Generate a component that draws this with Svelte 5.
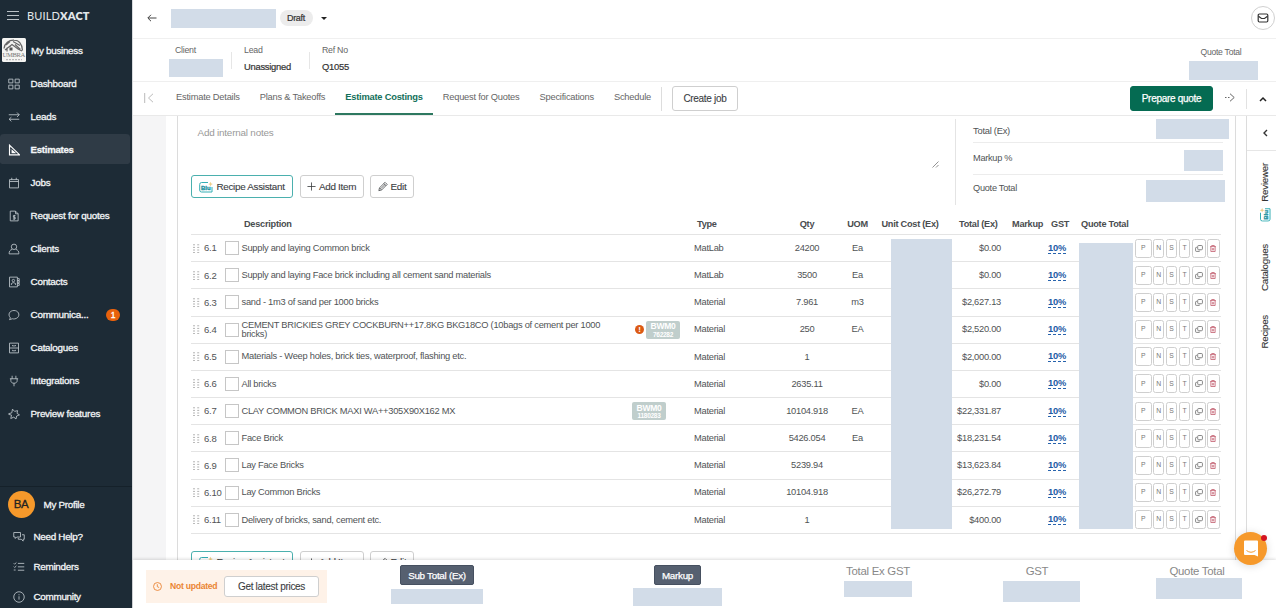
<script lang="ts">

    type NavItem = { icon: string; label: string; badge?: number };

    type CostItem = {
        no: string;
        description: string;
        type: string;
        qty: string;
        uom: string;
        total: string;
        supplier?: string;
        code?: string;
        warning?: boolean;
    };

    const icons: Record<string, string> = {
        dashboard: "M1 1.500h5.500v5H1zM9.500 1.500H15v5H9.500zM1 9.500h5.500v5H1zM9.500 9.500H15v5H9.500z",
        leads: "M1 5h14M12 2l3 3-3 3M15 11H1.500M4.500 8.200l-3 2.800 3 2.800",
        estimates: "M2 1.500V14.500H15.500ZM5.500 8.500V11.500H9ZM2 4.500h1M2 7.500h1",
        jobs: "M2 3.500h12v11H2zM2 6h12M5 1v3M11 1v3",
        quotes: "M3 1.500h7l3.500 3.500v9.500H3zM10 1.500V5h3.500M10 7.500H7.200v2.200h2.400v2.300H6.500M8.300 6.500v6.500",
        clients: "M8 1.500a3.600 3.600 0 1 1 0 7.200a3.600 3.600 0 1 1 0-7.200M5.500 8.500C2.500 9.500 1.500 11 1.500 14.500h13c0-3.500-1-5-4-6",
        contacts: "M2 1.500h10.500v13H2zM12.500 3.500H15v2.500h-2.500M12.500 6.500H15V9h-2.500M12.500 10H15v2.500h-2.500M7.200 4.500a1.600 1.600 0 1 1 0 3.200a1.600 1.600 0 1 1 0-3.200M4.500 11.500c0-3.500 5.500-3.500 5.500 0M4.500 11.500v-1.500M10 11.500v-1.500",
        chat: "M3.200 11.800C-1 7 2.500 2 8 2s8.500 5.500 5 9.200C10.500 13.500 7.500 13.500 5.800 13L2 14.200z",
        catalogues: "M2 1.500h12v13H2zM2 8h12M6 4v1.200h4V4M6 10.500v1.200h4v-1.200",
        plug: "M5.500 1v4M10.500 1v4M2.500 5h11M3.800 5v2.500c0 2 1.500 3.500 4.200 3.500s4.200-1.500 4.200-3.500V5M8 11v4",
        star: "M6 1.500l2.800 3 4-1-.8 3.700 3.300 2-3.800 1.500-.8 4-3-2.500-4 1.800 1-4.500-3.700-1V7.500l4-1z",
        help: "M1 2h9v6H5L3 10V8H1zM12 5h3v6h-1.500v2.500L11 11H7V9",
        reminders: "M1 3l1.200 1.200L4.500 2M1 7.500l1.200 1.200 2.300-2.200M1 12h2.500M6.500 3.200H15M6.500 7.800H15M6.500 12.300H15",
        info: "M8 1a7 7 0 1 1 0 14a7 7 0 1 1 0-14M8 7v4.500M8 4.300v1.400"
    };

    const navItems: NavItem[] = [
        { icon: "dashboard", label: "Dashboard" },
        { icon: "leads", label: "Leads" },
        { icon: "estimates", label: "Estimates" },
        { icon: "jobs", label: "Jobs" },
        { icon: "quotes", label: "Request for quotes" },
        { icon: "clients", label: "Clients" },
        { icon: "contacts", label: "Contacts" },
        { icon: "chat", label: "Communica...", badge: 1 },
        { icon: "catalogues", label: "Catalogues" },
        { icon: "plug", label: "Integrations" },
        { icon: "star", label: "Preview features" }
    ];

    const helpItems: NavItem[] = [
        { icon: "help", label: "Need Help?" },
        { icon: "reminders", label: "Reminders" },
        { icon: "info", label: "Community" }
    ];

    const tabs = ["Estimate Details", "Plans & Takeoffs", "Estimate Costings", "Request for Quotes", "Specifications", "Schedule"];

    const items: CostItem[] = [
        { no: "6.1", description: "Supply and laying Common brick", type: "MatLab", qty: "24200", uom: "Ea", total: "$0.00" },
        { no: "6.2", description: "Supply and laying Face brick including all cement sand materials", type: "MatLab", qty: "3500", uom: "Ea", total: "$0.00" },
        { no: "6.3", description: "sand - 1m3 of sand per 1000 bricks", type: "Material", qty: "7.961", uom: "m3", total: "$2,627.13" },
        { no: "6.4", description: "CEMENT BRICKIES GREY COCKBURN++17.8KG BKG18CO (10bags of cement per 1000 bricks)", type: "Material", qty: "250", uom: "EA", total: "$2,520.00", supplier: "BWM0", code: "762282", warning: true },
        { no: "6.5", description: "Materials - Weep holes, brick ties, waterproof, flashing etc.", type: "Material", qty: "1", uom: "", total: "$2,000.00" },
        { no: "6.6", description: "All bricks", type: "Material", qty: "2635.11", uom: "", total: "$0.00" },
        { no: "6.7", description: "CLAY COMMON BRICK MAXI WA++305X90X162 MX", type: "Material", qty: "10104.918", uom: "EA", total: "$22,331.87", supplier: "BWM0", code: "1180283" },
        { no: "6.8", description: "Face Brick", type: "Material", qty: "5426.054", uom: "Ea", total: "$18,231.54" },
        { no: "6.9", description: "Lay Face Bricks", type: "Material", qty: "5239.94", uom: "", total: "$13,623.84" },
        { no: "6.10", description: "Lay Common Bricks", type: "Material", qty: "10104.918", uom: "", total: "$26,272.79" },
        { no: "6.11", description: "Delivery of bricks, sand, cement etc.", type: "Material", qty: "1", uom: "", total: "$400.00" }
    ];

    let activeNav = $state("Estimates");
    let activeTab = $state("Estimate Costings");

</script>

{#snippet icon(name: string)}
    <svg class="icon" viewBox="0 0 16 16" aria-hidden="true"><path d={icons[name]} /></svg>
{/snippet}

{#snippet blu()}
    <svg class="blu" viewBox="0 0 14 12" aria-hidden="true">
        <path d="M9 1.500H2.500Q.7 1.500.7 3.500V9Q.7 11 2.500 11H13V6" fill="none" stroke="#35aeb4" />
        <text x="2" y="8.600">Blu</text>
        <path d="M10.700 2.500l.8-1.800.8 1.800 1.600.6-1.600.7-.8 1.400-.8-1.400-1.400-.7z" fill="#f0cf8c" />
    </svg>
{/snippet}

{#snippet toolbar()}
    <div class="toolbar">
        <button class="btn btn-recipe" type="button">{@render blu()}Recipe Assistant</button>
        <button class="btn btn-add" type="button">
            <svg class="plus" viewBox="0 0 10 10" aria-hidden="true"><path d="M5 .5v9M.5 5h9" /></svg>
            Add Item
        </button>
        <button class="btn btn-edit" type="button">
            <svg class="pencil" viewBox="0 0 12 12" aria-hidden="true"><path d="M1 11l.8-3.400L8.500 1l2.500 2.500L4.300 10.200zM7 2.500L9.500 5M2 7.800l2.200 2.200M3.500 8.500l5-5" /></svg>
            Edit
        </button>
    </div>
{/snippet}

<div class="app">
    <aside class="sidebar">
        <div class="brand">
            <svg class="burger" viewBox="0 0 12 9" aria-hidden="true"><path d="M0 .5h12M0 4.500h12M0 8.500h12" /></svg>
            <span class="brand-name">BUILD<b>XACT</b></span>
        </div>
        <div class="business">
            <svg class="business-logo" viewBox="0 0 24 24" aria-hidden="true">
                <rect width="24" height="24" rx="1.500" fill="#f4f4f2" stroke="none" />
                <path d="M2 10.500C2.500 5 7 2 12 2.200c5 0 8 4 8.500 10.300M3 12l7-5.500 6 4.500 4 2M5 13.500V10l4-2M4 7l4-3.500M11 3.500l7 4M13 6.500l5.500 5" fill="none" stroke="#666" stroke-width="1.200" />
                <path d="M7.500 9.500h3v3h-3z" fill="#555" stroke="none" />
                <text x="0.500" y="19.300" class="logo-name">UMBRA</text>
                <path d="M4 21.700h16" stroke="#aaa" stroke-dasharray="2 1" />
            </svg>
            <span>My business</span>
        </div>
        <nav class="nav">
            {#each navItems as item}
                <button class="nav-item" class:nav-item-active={item.label === activeNav} type="button" onclick={() => (activeNav = item.label)}>
                    {@render icon(item.icon)}
                    <span class="nav-label">{item.label}</span>
                    {#if item.badge}
                        <span class="nav-badge">{item.badge}</span>
                    {/if}
                </button>
            {/each}
        </nav>
        <div class="profile">
            <div class="profile-row"><span class="avatar">BA</span>My Profile</div>
            {#each helpItems as item}
                <div class="help-row">{@render icon(item.icon)}{item.label}</div>
            {/each}
        </div>
    </aside>

    <main class="main">
        <header class="titlebar">
            <svg class="back" viewBox="0 0 10 8" aria-hidden="true"><path d="M9.500 4H1M4 .8L.8 4 4 7.200" /></svg>
            <span class="redacted title-block"></span>
            <span class="status">Draft</span>
            <span class="caret"></span>
            <button class="mail" type="button" aria-label="Messages">
                <svg viewBox="0 0 12 10" aria-hidden="true"><rect x="1.200" y="1" width="9.600" height="8" rx="1.200" /><path d="M1.500 3.200L4.500 5.500h3L10.500 3.200" /></svg>
            </button>
        </header>

        <section class="info">
            <div class="info-cell client">
                <span class="info-label">Client</span>
                <span class="redacted client-block"></span>
            </div>
            <span class="info-divider"></span>
            <div class="info-cell lead"><span class="info-label">Lead</span><span class="info-value">Unassigned</span></div>
            <span class="info-divider"></span>
            <div class="info-cell ref"><span class="info-label">Ref No</span><span class="info-value">Q1055</span></div>
            <div class="info-total">
                <span class="info-label">Quote Total</span>
                <span class="redacted total-block"></span>
            </div>
        </section>

        <div class="tabbar">
            <svg class="tab-first" viewBox="0 0 10 10" aria-hidden="true"><path d="M.7 0v10M9 .8L4.500 5 9 9.200" /></svg>
            {#each tabs as tab}
                <button class="tab" class:tab-active={tab === activeTab} type="button" onclick={() => (activeTab = tab)}>{tab}</button>
            {/each}
            <span class="tab-divider"></span>
            <button class="btn btn-job" type="button">Create job</button>
            <button class="btn btn-prepare" type="button">Prepare quote</button>
            <svg class="next" viewBox="0 0 10 9" aria-hidden="true"><path d="M0 4.500h1.500M3 4.500h1.500M5 .7l4.200 3.800L5 8.300" /></svg>
            <span class="collapse">
                <svg viewBox="0 0 8 6" aria-hidden="true"><path d="M1 5l3-3 3 3" /></svg>
            </span>
        </div>

        <div class="workspace">
            <div class="canvas">
                <div class="sheet">
                    <div class="overview">
                        <div class="overview-left">
                            <div class="notes">
                                Add internal notes
                                <svg class="resize" viewBox="0 0 7 7" aria-hidden="true"><path d="M.5 6.500l6-6M4 6.500L6.500 4" /></svg>
                            </div>
                            {@render toolbar()}
                        </div>
                        <div class="summary">
                            <div class="summary-row row-total"><span>Total (Ex)</span><i class="redacted"></i></div>
                            <div class="summary-row row-markup"><span>Markup %</span><i class="redacted"></i></div>
                            <div class="summary-row row-quote"><span>Quote Total</span><i class="redacted"></i></div>
                        </div>
                    </div>

                    <div class="table">
                        <div class="row head">
                            <span class="h-desc">Description</span>
                            <span class="h-type">Type</span>
                            <span class="center">Qty</span>
                            <span class="center">UOM</span>
                            <span class="center">Unit Cost (Ex)</span>
                            <span class="h-total">Total (Ex)</span>
                            <span class="h-markup">Markup</span>
                            <span class="h-gst">GST</span>
                            <span class="h-quote">Quote Total</span>
                        </div>
                        {#each items as item}
                            <div class="row">
                                <svg class="grip" viewBox="0 0 7 9" aria-hidden="true"><path d="M0 .8h2M4.200.8h2M0 3.400h2M4.200 3.400h2M0 6h2M4.200 6h2M0 8.600h2M4.200 8.600h2" /></svg>
                                <span class="no">{item.no}</span>
                                <span class="check"></span>
                                <span class="desc">{item.description}</span>
                                <span class="tags">
                                    {#if item.warning}
                                        <span class="warning">!</span>
                                    {/if}
                                    {#if item.supplier}
                                        <span class="chip"><b>{item.supplier}</b><small>{item.code}</small></span>
                                    {/if}
                                </span>
                                <span class="cell">{item.type}</span>
                                <span class="cell center">{item.qty}</span>
                                <span class="cell center">{item.uom}</span>
                                <span></span>
                                <span class="cell right">{item.total}</span>
                                <span></span>
                                <span class="center"><span class="gst">10%</span></span>
                                <span></span>
                                <span class="actions">
                                    {#each ["P", "N", "S", "T"] as letter}
                                        <button class="action action-{letter.toLowerCase()}" type="button">{letter}</button>
                                    {/each}
                                    <button class="action action-copy" type="button" aria-label="Copy">
                                        <svg viewBox="0 0 9 8" aria-hidden="true"><rect x="3" y=".6" width="5.400" height="4.800" rx="1" /><path d="M2.200 2.700H1.500Q.6 2.700.6 3.600V6.400Q.6 7.300 1.500 7.300H4.500Q5.400 7.300 5.400 6.500" /></svg>
                                    </button>
                                    <button class="action action-trash" type="button" aria-label="Delete">
                                        <svg viewBox="0 0 7 8" aria-hidden="true"><path d="M0 1.800h7M2 1.800V.5h3v1.300M1 2v5.500h5V2M2.700 3.500v2.700M4.300 3.500v2.700" /></svg>
                                    </button>
                                </span>
                            </div>
                        {/each}
                        <div class="redacted cover-cost"></div>
                        <div class="redacted cover-quote"></div>
                    </div>

                    {@render toolbar()}
                </div>
            </div>
            <aside class="rail">
                <div class="rail-toggle">
                    <svg viewBox="0 0 6 8" aria-hidden="true"><path d="M5 1L2 4l3 3" /></svg>
                </div>
                <div class="rail-item rail-reviewer">{@render blu()}<span>Reviewer</span></div>
                <div class="rail-item rail-catalogues">Catalogues</div>
                <div class="rail-item rail-recipes">Recipes</div>
            </aside>
        </div>

        <footer class="footer">
            <div class="stale">
                <svg viewBox="0 0 10 10" aria-hidden="true"><path d="M5 .6a4.400 4.400 0 1 1 0 8.800a4.400 4.400 0 1 1 0-8.800M4.800 2.500V5.200l2 .9" /></svg>
                <b>Not updated</b>
                <button class="btn btn-prices" type="button">Get latest prices</button>
            </div>
            <div class="figure fig-sub"><span class="figure-btn">Sub Total (Ex)</span><i class="redacted"></i></div>
            <div class="figure fig-markup"><span class="figure-btn">Markup</span><i class="redacted"></i></div>
            <div class="figure fig-ex"><span class="figure-label">Total Ex GST</span><i class="redacted"></i></div>
            <div class="figure fig-gst"><span class="figure-label">GST</span><i class="redacted"></i></div>
            <div class="figure fig-quote"><span class="figure-label">Quote Total</span><i class="redacted"></i></div>
        </footer>
    </main>

    <div class="chat-launcher">
        <svg viewBox="0 0 16 17" aria-hidden="true">
            <path d="M2 .5h12Q15 .5 15 1.500V16.500L11.500 15H2Q1 15 1 14V1.500Q1 .5 2 .5z" fill="#fff" />
            <path class="smile" d="M3.500 10.500q4.500 3.500 9 0" />
        </svg>
        <span class="chat-dot"></span>
    </div>
</div>

<style>
    :global(body) {
        background: #fff;
    }

    .app {
        position: relative;
        display: flex;
        width: 1276px;
        height: 608px;
        overflow: hidden;
        background: #fff;
        color: #505355;
        font-family: "Liberation Sans", Arial, sans-serif;
        font-size: 9.3px;
        letter-spacing: -0.028em;
        line-height: 1;
    }

    .app * {
        box-sizing: border-box;
    }

    button {
        margin: 0;
        padding: 0;
        border: 0;
        background: transparent;
        color: inherit;
        font: inherit;
        letter-spacing: -0.03em;
        white-space: nowrap;
    }

    svg {
        display: block;
        flex: none;
        fill: none;
        stroke: currentColor;
    }

    .redacted {
        display: block;
        flex: none;
        background: #d2dce8;
    }

    /* sidebar */
    .sidebar {
        display: flex;
        flex: none;
        flex-direction: column;
        width: 132px;
        background: #1d2b36;
        color: #f3f5f6;
        font-size: 9.9px;
        letter-spacing: -0.3px;
        -webkit-text-stroke: 0.3px currentColor;
    }

    .brand {
        display: flex;
        align-items: center;
        gap: 8px;
        height: 31px;
        padding-left: 7px;
    }

    .burger {
        width: 12px;
        height: 9px;
        color: #b9c0c5;
    }

    .brand-name {
        color: #e3e7ea;
        font-family: Lato, sans-serif;
        font-size: 11px;
        letter-spacing: 0.15px;
        -webkit-text-stroke: 0;
    }

    .brand-name b {
        font-weight: 800;
    }

    .business {
        display: flex;
        align-items: center;
        gap: 4px;
        height: 36px;
        padding: 2px 0 0 2px;
    }

    .business-logo {
        width: 24px;
        height: 24px;
    }

    .logo-name {
        fill: #777;
        stroke: none;
        font-family: "Liberation Serif", serif;
        font-size: 6.6px;
        letter-spacing: -0.35px;
        -webkit-text-stroke: 0;
    }

    .business span {
        margin: 1px 0 0 1px;
    }

    .nav {
        flex: 1;
    }

    .nav-item {
        display: flex;
        align-items: center;
        width: 130px;
        height: 33px;
        padding: 2px 0 0 8px;
        border-top: 1px solid transparent;
        border-bottom: 2px solid transparent;
        border-radius: 4px;
        background-clip: padding-box;
        letter-spacing: -0.025em;
    }

    .nav-item-active {
        background-color: #2f3b46;
        font-weight: 700;
        font-size: 9.6px;
    }

    .icon {
        width: 12px;
        height: 12px;
        color: #bcc4c9;
        stroke-width: 1.15;
    }

    .nav-item-active .icon {
        color: #fff;
        stroke-width: 1.5;
    }

    .nav-label {
        margin-left: 10.500px;
    }

    .nav-badge {
        width: 14px;
        height: 12px;
        margin: 0 10px 0 auto;
        border-radius: 6px;
        background: #e8610c;
        color: #fff;
        font-size: 8.500px;
        line-height: 12px;
        text-align: center;
    }

    .profile {
        height: 122px;
        padding-top: 3.500px;
        border-top: 1px solid #15212a;
    }

    .profile-row {
        display: flex;
        align-items: center;
        gap: 9px;
        height: 28px;
        padding-left: 7.500px;
    }

    .avatar {
        width: 27px;
        height: 27px;
        border-radius: 50%;
        background: #f6992b;
        color: #222;
        font-size: 11.500px;
        line-height: 27px;
        text-align: center;
    }

    .help-row {
        display: flex;
        align-items: center;
        gap: 9px;
        height: 29.500px;
        padding-left: 12.500px;
    }

    .profile-row + .help-row {
        height: 34px;
        padding-top: 3px;
    }

    /* header */
    .main {
        display: flex;
        flex: 1;
        flex-direction: column;
        min-width: 0;
        border-left: 1px solid #d8dbde;
    }

    .titlebar {
        display: flex;
        flex: none;
        align-items: center;
        height: 39px;
        padding-bottom: 2px;
        border-bottom: 1px solid #f0f0f0;
    }

    .back {
        width: 10px;
        height: 8px;
        margin-left: 14px;
        color: #444;
    }

    .title-block {
        width: 105px;
        height: 19px;
        margin-left: 14px;
    }

    .status {
        width: 33px;
        height: 16px;
        margin-left: 3.500px;
        border-radius: 8px;
        background: #ececec;
        color: #333;
        font-size: 9px;
        line-height: 16px;
        text-align: center;
        -webkit-text-stroke: 0.2px currentColor;
    }

    .caret {
        margin-left: 8px;
        border: 3px solid transparent;
        border-top-color: #222;
        border-bottom: 0;
    }

    .mail {
        display: grid;
        place-items: center;
        width: 24px;
        height: 24px;
        margin-left: auto;
        margin-right: 1px;
        border: 1px solid #d0d0d0;
        border-radius: 50%;
        color: #333;
    }

    .mail svg {
        width: 12px;
        height: 10px;
        stroke-width: 1.2;
    }

    .info {
        display: flex;
        flex: none;
        height: 43px;
        padding-left: 36px;
        border-bottom: 1px solid #efefef;
    }

    .info-cell {
        display: flex;
        flex-direction: column;
        padding-top: 7px;
    }

    .info-divider {
        width: 1px;
        height: 17px;
        margin-top: 13px;
        background: #e6e6e6;
    }

    .info-label {
        color: #666;
        font-size: 8.800px;
    }

    .info-value {
        margin-top: 7px;
        color: #333;
        font-size: 9.400px;
        -webkit-text-stroke: 0.2px currentColor;
    }

    .client {
        width: 62px;
    }

    .client .info-label {
        padding-left: 6px;
    }

    .client-block {
        width: 54px;
        height: 18px;
        margin-top: 4px;
    }

    .lead {
        width: 77px;
        padding-left: 12px;
    }

    .ref {
        width: 80px;
        padding-left: 12px;
    }

    .info-total {
        display: flex;
        flex-direction: column;
        align-items: center;
        margin-left: auto;
        padding: 9px 18px 0 0;
    }

    .info-total .info-label {
        margin-right: 5px;
        font-size: 8.600px;
    }

    .total-block {
        width: 69px;
        height: 19px;
        margin-top: 4.500px;
    }

    .tabbar {
        display: flex;
        flex: none;
        align-items: center;
        height: 34px;
        border-bottom: 1px solid #e9e9e9;
    }

    .tab-first {
        width: 10px;
        height: 10px;
        margin: 0 12px 2px 11px;
        color: #bbb;
    }

    .tab {
        height: 33px;
        padding: 0 10px;
        border-bottom: 2px solid transparent;
        color: #666;
        font-size: 9.3px;
        letter-spacing: -0.023em;
    }

    .tab-active {
        border-bottom-color: #2d7860;
        color: #13705a;
        font-weight: 700;
    }

    .tab-divider {
        width: 1px;
        height: 24px;
        background: #ddd;
    }

    .btn {
        display: flex;
        align-items: center;
        justify-content: center;
        height: 23px;
        border: 1px solid #cfcfcf;
        border-radius: 3px;
        background: #fff;
        color: #3a3d3f;
        font-size: 9.9px;
        -webkit-text-stroke: 0.1px currentColor;
    }

    .btn-job {
        width: 66px;
        height: 25px;
        margin-left: 10px;
        font-size: 10px;
    }

    .btn-prepare {
        width: 83px;
        height: 25px;
        margin-left: auto;
        border-color: #056b52;
        background: #056b52;
        color: #fff;
        font-size: 10px;
        -webkit-text-stroke: 0.25px currentColor;
    }

    .next {
        width: 10px;
        height: 9px;
        margin: 0 11px 2px 12px;
        color: #666;
    }

    .collapse {
        display: grid;
        place-items: center;
        width: 30px;
        height: 20px;
        padding-left: 3px;
        border-left: 1px solid #e2e2e2;
        color: #222;
    }

    .collapse svg {
        width: 8px;
        height: 6px;
        stroke-width: 1.5;
    }

    /* workspace */
    .workspace {
        display: flex;
        flex: 1;
        min-height: 0;
        overflow: hidden;
    }

    .canvas {
        flex: 1;
        min-width: 0;
        padding-right: 10px;
        border-left: 33px solid #f5f5f6;
        padding-left: 11px;
    }

    .sheet {
        height: 600px;
        padding: 0 13px;
        border: solid #dcdcdc;
        border-width: 0 1px 0 1px;
    }

    .overview {
        display: flex;
        height: 98px;
    }

    .overview-left {
        flex: none;
        width: 764px;
    }

    .notes {
        display: flex;
        justify-content: space-between;
        height: 59px;
        padding: 12px 16px 0 6.500px;
        color: #999;
        font-size: 9.9px;
        letter-spacing: -0.02em;
    }

    .resize {
        width: 7px;
        height: 7px;
        margin-top: 33px;
        color: #777;
        stroke-width: 0.8;
    }

    .toolbar {
        display: flex;
        gap: 6.500px;
    }

    .table + .toolbar {
        margin-top: 17px;
    }

    .btn-recipe {
        gap: 3px;
        width: 102px;
        border-color: #4bb0ae;
    }

    .blu {
        width: 14px;
        height: 12px;
        writing-mode: horizontal-tb;
        -webkit-text-stroke: 0;
    }

    .blu text {
        fill: #168f9d;
        stroke: #168f9d;
        stroke-width: 0.3;
        font-size: 6px;
        font-weight: 700;
        letter-spacing: 0;
    }

    .blu path:last-child {
        stroke: none;
    }

    .btn-add {
        gap: 3px;
        width: 64px;
    }

    .plus {
        width: 9px;
        height: 9px;
        stroke-width: 0.9;
    }

    .btn-edit {
        gap: 3px;
        width: 44px;
    }

    .pencil {
        width: 10px;
        height: 11px;
        stroke-width: 0.9;
    }

    .summary {
        flex: none;
        width: 275px;
        height: 86px;
        margin-top: 3px;
        padding-left: 17px;
        border-left: 1px solid #e4e4e4;
    }

    .summary-row {
        display: flex;
        justify-content: space-between;
        align-items: flex-start;
        width: 250px;
        border-bottom: 1px solid #ececec;
        font-size: 9.2px;
    }

    .row-total {
        height: 24px;
    }

    .row-total span {
        margin-top: 7px;
        font-size: 9.4px;
    }

    .row-total .redacted {
        width: 73px;
        height: 20px;
        margin-right: -6px;
    }

    .row-markup {
        height: 32px;
    }

    .row-markup span {
        margin-top: 11px;
    }

    .row-markup .redacted {
        width: 39px;
        height: 21px;
        margin-top: 7px;
    }

    .row-quote {
        border-bottom: 0;
    }

    .row-quote span {
        margin-top: 9px;
    }

    .row-quote .redacted {
        width: 79px;
        height: 22px;
        margin: 5px -2px 0 0;
    }

    .table {
        position: relative;
        width: 1030px;
    }

    .row {
        display: grid;
        grid-template-columns: 13px 21px 16px 391px 62px 73px 80px 21px 84px 49px 41px 30px 63px 86px;
        align-items: center;
        height: 27.180px;
        border-bottom: 1px solid #e4e4e4;
    }

    .head {
        height: 21px;
        padding-top: 1px;
        color: #4a4d4f;
        font-size: 9.2px;
        font-weight: 700;
        white-space: nowrap;
    }

    .h-desc {
        grid-column: 1 / 6;
        padding-left: 53px;
    }

    .h-type {
        padding-left: 3px;
    }

    .h-total {
        padding-left: 7px;
    }

    .h-markup {
        padding-left: 11px;
    }

    .h-gst {
        padding-left: 9px;
    }

    .h-quote {
        padding-left: 9px;
    }

    .cell {
        padding-top: 0.800px;
    }

    .center {
        display: flex;
        justify-content: center;
    }

    .right {
        text-align: right;
    }

    .grip {
        width: 7px;
        height: 9px;
        margin-left: 2px;
        color: #aaa;
        stroke-width: 0.9;
    }

    .no {
        font-size: 9.5px;
    }

    .check {
        width: 14px;
        height: 14px;
        border: 1px solid #c6c6c6;
    }

    .desc {
        width: 365px;
        padding: 1px 0 0 0.500px;
        line-height: 9.600px;
    }

    .tags {
        display: flex;
        align-items: center;
    }

    .warning {
        width: 9px;
        height: 9px;
        margin: 0 2px 0 3px;
        border-radius: 50%;
        background: #dc5a14;
        color: #fff;
        font-size: 8px;
        font-weight: 700;
        line-height: 9px;
        text-align: center;
    }

    .chip {
        display: flex;
        flex-direction: column;
        align-items: center;
        width: 34px;
        height: 18px;
        padding-top: 1.500px;
        border-radius: 2px;
        background: #c0cecc;
        color: #fff;
    }

    .chip b {
        font-size: 8.500px;
    }

    .chip small {
        font-size: 6.500px;
        font-weight: 700;
        line-height: 7px;
    }

    .gst {
        border-bottom: 1px dashed #2763ad;
        color: #1c5aa6;
        font-weight: 700;
        line-height: 10px;
    }

    .actions {
        display: flex;
        gap: 1.400px;
    }

    .action {
        display: grid;
        place-items: center;
        width: 11.500px;
        height: 19px;
        border: 1px solid #cfcfcf;
        border-radius: 2.500px;
        background: #fff;
        color: #777;
        font-size: 6.8px;
    }

    .action-p {
        width: 16.500px;
    }

    .action-copy {
        width: 14px;
    }

    .action-copy svg {
        width: 8px;
        height: 7px;
        color: #666;
        stroke-width: 0.9;
    }

    .action-trash {
        width: 13px;
    }

    .action-trash svg {
        width: 6px;
        height: 7px;
        color: #c0596a;
        stroke-width: 0.9;
    }

    .cover-cost {
        position: absolute;
        top: 25px;
        left: 700px;
        width: 61px;
        height: 290px;
    }

    .cover-quote {
        position: absolute;
        top: 29px;
        left: 888px;
        width: 54px;
        height: 286px;
    }

    .rail {
        display: flex;
        flex: none;
        flex-direction: column;
        align-items: center;
        width: 30px;
        border-left: 1px solid #dcdcdc;
        color: #333;
        font-size: 9.8px;
    }

    .rail-toggle {
        display: grid;
        place-items: center;
        width: 29px;
        height: 35px;
        padding-left: 7px;
        border-bottom: 1px solid #e6e6e6;
    }

    .rail-toggle svg {
        width: 6px;
        height: 8px;
        stroke-width: 1.4;
    }

    .rail-item {
        display: flex;
        align-items: center;
        gap: 7px;
        margin-left: 6px;
        writing-mode: vertical-rl;
        transform: rotate(180deg);
        -webkit-text-stroke: 0.1px currentColor;
    }

    .rail-reviewer {
        margin-top: 12px;
    }

    .rail-reviewer .blu {
        margin-right: 1px;
        transform: rotate(90deg);
    }

    .rail-catalogues {
        margin-top: 23px;
    }

    .rail-recipes {
        margin-top: 24px;
    }

    /* footer */
    .footer {
        position: relative;
        display: grid;
        flex: none;
        grid-template-columns: 181px 220px 261px 140px 186px 130px;
        height: 48px;
        padding-left: 13px;
        background: #fff;
        box-shadow: 0 -1px 3px rgba(0, 0, 0, 0.14);
    }

    .stale {
        display: flex;
        align-items: center;
        height: 33px;
        margin-top: 10px;
        padding-left: 7px;
        background: #fef2e8;
        color: #ea8534;
    }

    .stale svg {
        width: 9px;
        height: 9px;
    }

    .stale b {
        margin-left: 8px;
        font-size: 8.6px;
        white-space: nowrap;
    }

    .btn-prices {
        width: 95px;
        height: 21px;
        margin: 0 8px 0 auto;
        font-size: 10px;
    }

    .figure {
        display: flex;
        flex-direction: column;
        align-items: center;
    }

    .figure-btn {
        height: 20px;
        margin-top: 4.500px;
        padding: 0 7px;
        border: 1px solid #465060;
        border-radius: 2px;
        background: #566070;
        color: #fff;
        font-size: 9.8px;
        line-height: 19px;
        -webkit-text-stroke: 0.25px currentColor;
    }

    .figure-label {
        margin-top: 6px;
        color: #888;
        font-size: 11.4px;
    }

    .fig-sub .redacted {
        width: 92px;
        height: 15px;
        margin-top: 4.500px;
    }

    .fig-markup .redacted {
        width: 89px;
        height: 18px;
        margin-top: 3.500px;
    }

    .fig-ex .redacted {
        width: 68px;
        height: 16px;
        margin-top: 3.500px;
    }

    .fig-gst .figure-label {
        margin-right: 8px;
    }

    .fig-gst .redacted {
        width: 77px;
        height: 21px;
        margin-top: 3.500px;
    }

    .fig-quote .figure-label {
        margin-right: 4px;
    }

    .fig-quote .redacted {
        width: 86px;
        height: 21px;
        margin-top: 0.500px;
    }

    .chat-launcher {
        position: absolute;
        top: 532px;
        left: 1234px;
        display: grid;
        place-items: center;
        width: 33px;
        height: 33px;
        border-radius: 50%;
        background: #f6992b;
        box-shadow: 0 1px 8px rgba(0, 0, 0, 0.15);
    }

    .chat-launcher svg {
        width: 16px;
        height: 17px;
        stroke: none;
    }

    .smile {
        stroke: #f6992b;
    }

    .chat-dot {
        position: absolute;
        top: 3px;
        right: 0;
        width: 6px;
        height: 6px;
        border-radius: 50%;
        background: #d4131f;
    }
</style>
